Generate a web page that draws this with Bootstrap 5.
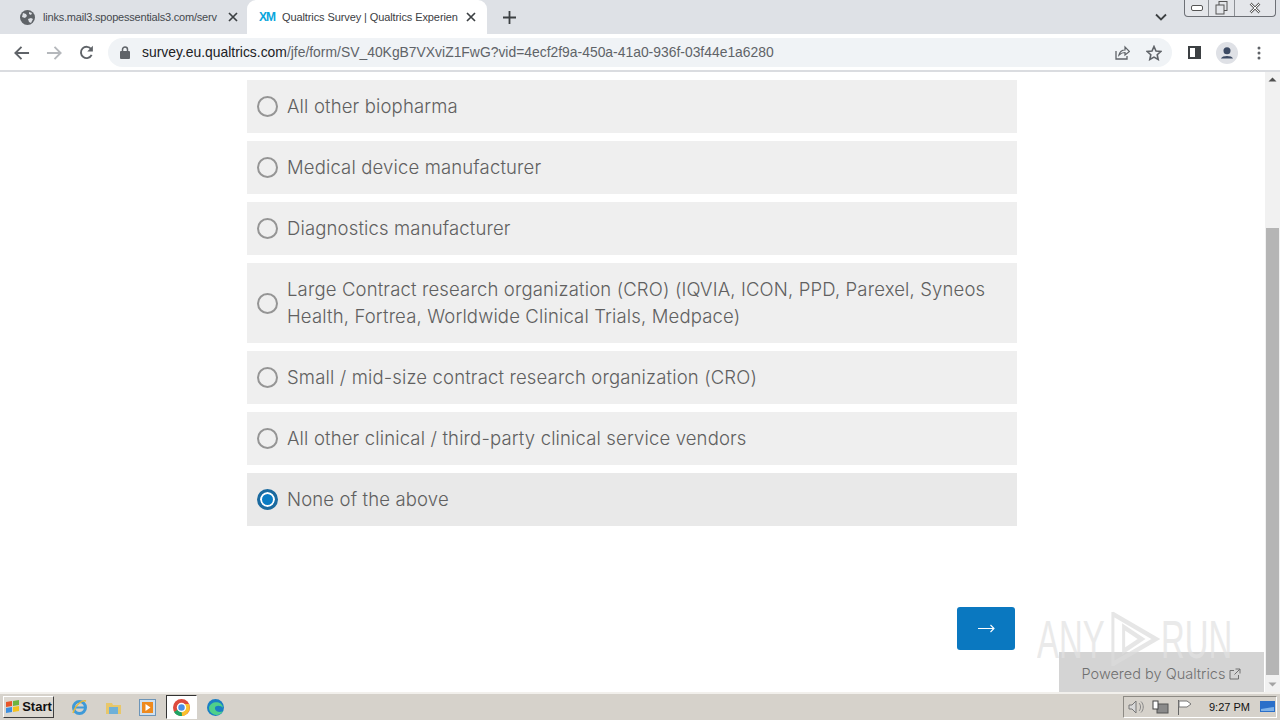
<!DOCTYPE html>
<html lang="en">
<head>
  <meta charset="UTF-8">
  <meta name="viewport" content="width=device-width, initial-scale=1">
  <title>Qualtrics Survey</title>
  <link href="https://cdn.jsdelivr.net/npm/bootstrap@5.3.3/dist/css/bootstrap.min.css" rel="stylesheet">
  <style>
    html, body { height: 720px; overflow: hidden; }
    body { font-family: "Liberation Sans", Arial, sans-serif; background: #fff; position: relative; }
    .tab-strip { height: 34px; background: #dee1e6; font-size: 11px; color: #45494e; }
    .chrome-tab { height: 34px; }
    .chrome-tab.first-tab { width: 247px; padding: 0 9px 0 20px; letter-spacing: -.2px; }
    .chrome-tab.active-tab { background: #fff; border-radius: 9px 9px 0 0; color: #3c4043; width: 240px; padding: 0 11px 0 12px; letter-spacing: -.1px; }
    .tab-title { flex: 1; white-space: nowrap; overflow: hidden; min-width: 0; }
    .xm-logo { color: #0aa5dc; font-weight: 700; font-size: 12px; letter-spacing: -1px; width: 23px; }
    .chevron-down { margin-left: auto; margin-right: 17px; }
    .win-btns { width: 92px; height: 17px; border: 1px solid #6d7076; border-top: 0; border-radius: 0 0 4px 4px; align-self: flex-start; margin-right: 4px; background: #e4e6ea; }
    .win-btns > div { border-right: 1px solid #8d9095; height: 100%; }
    .win-btns > div:last-child { border-right: 0; }
    .win-min { width: 24px; }
    .win-max { width: 26px; }
    .win-close { flex: 1; }
    .tool-bar { height: 38px; border-bottom: 2px solid #dadce0; background: #fff; padding: 1px 0 0 13px; }
    .url-box { width: 1064px; height: 29px; margin-left: 14px; background: #f0f3f6; border-radius: 15px; font-size: 13.9px; color: #5f6368; padding-left: 12px; white-space: nowrap; }
    .url-box b { font-weight: 400; color: #202124; }
    .page-area { height: 620px; }
    .survey-col { width: 1265px; padding: 8px 0 0 247px; }
    .answer-row { width: 770px; background: #efefef; padding: 13px 20px 13px 10px; gap: 9px; margin-bottom: 8px; font-family: Inter, "Liberation Sans", sans-serif; font-size: 18.5px; font-weight: 300; line-height: 27px; letter-spacing: .15px; color: #606060; }
    .answer-row.picked { background: #e9e9e9; }
    .radio-ring { flex: 0 0 21px; height: 21px; border: 2px solid #959595; border-radius: 50%; }
    .picked .radio-ring { border: 3px solid #1b6a9f; background: #0a7cc4; box-shadow: inset 0 0 0 2px #fff; }
    .next-wrap { width: 770px; padding: 73px 2px 0 0; }
    .next-btn { width: 58px; height: 43px; background: #0a78c0; border: 0; border-radius: 3px; padding: 0; }
    .scroll-bar { width: 15px; height: 620px; background: #f1f1f1; }
    .scroll-thumb { width: 13px; height: 447px; margin: 156px auto 0; background: #b5b5b5; }
    .powered-box { position: absolute; left: 1059px; top: 652px; width: 205px; height: 40px; padding-top: 4px; background: rgba(205,205,205,.85); color: #707070; font-family: Inter, sans-serif; font-size: 14.5px; font-weight: 300; }
    .any-mark { position: absolute; left: 1037px; top: 608px; width: 315px; opacity: .7; color: #e2e2e2; font-size: 53px; line-height: 1; transform: scaleX(.62); transform-origin: left center; }
    .task-bar { height: 28px; background: #d6d2cb; border-top: 2px solid #f2f0ec; padding-left: 3px; position: absolute; top: 692px; left: 0; width: 1280px; }
    .start-btn { width: 51px; height: 22px; background: #dcd8d1; border: 1px solid; border-color: #fff #3e3e3e #3e3e3e #fff; font-size: 13px; font-weight: 700; color: #111; gap: 2px; }
    .tray-box { width: 154px; height: 22px; margin-left: auto; margin-right: 3px; border: 1px solid; border-color: #8d8a84 #fff #fff #8d8a84; font-size: 11px; color: #111; padding: 0 1px 0 4px; }
    .chrome-active { width: 31px; height: 24px; background: #fff; border: 1px solid; border-color: #333 #fff #fff #333; }
  </style>
</head>
<body>

  <div class="tab-strip d-flex align-items-center">
    <div class="chrome-tab first-tab d-flex align-items-center">
      <svg width="15" height="15" viewBox="0 0 15 15" class="flex-shrink-0 me-2"><circle cx="7.500" cy="7.500" r="7.500" fill="#5f6368"/><path d="M3 3l3 1 1 2-2 2-3-1zM8 9l3-1 2 1-2 4-2-1zM9 2l3 1-1 2-2-1z" fill="#dee1e6"/></svg>
      <span class="tab-title">links.mail3.spopessentials3.com/serv</span>
      <svg width="10" height="10" viewBox="0 0 10 10" class="flex-shrink-0 ms-2"><path d="M1 1l8 8M9 1l-8 8" stroke="#3c4043" stroke-width="1.700"/></svg>
    </div>
    <div class="chrome-tab active-tab d-flex align-items-center">
      <span class="xm-logo">XM</span>
      <span class="tab-title">Qualtrics Survey | Qualtrics Experien</span>
      <svg width="10" height="10" viewBox="0 0 10 10" class="flex-shrink-0 ms-2"><path d="M1 1l8 8M9 1l-8 8" stroke="#3c4043" stroke-width="1.700"/></svg>
    </div>
    <svg width="13" height="13" viewBox="0 0 13 13" class="ms-3"><path d="M6.500 0v13M0 6.500h13" stroke="#3c4043" stroke-width="1.800"/></svg>
    <svg width="12" height="8" viewBox="0 0 12 8" class="chevron-down"><path d="M1 1.500l5 5 5-5" fill="none" stroke="#3c4043" stroke-width="1.800"/></svg>
    <div class="win-btns d-flex">
      <div class="win-min d-flex align-items-center justify-content-center"><svg width="12" height="6" viewBox="0 0 12 6"><rect x=".5" y=".5" width="11" height="5" rx="1.500" fill="#fff" stroke="#555"/></svg></div>
      <div class="win-max d-flex align-items-center justify-content-center"><svg width="13" height="14" viewBox="0 0 13 14"><rect x="4" y=".5" width="8" height="9" fill="none" stroke="#555"/><rect x="1" y="4" width="8" height="9" fill="#e4e6ea" stroke="#555"/></svg></div>
      <div class="win-close d-flex align-items-center justify-content-center"><svg width="12" height="12" viewBox="0 0 12 12"><path d="M1.500 1.500l9 9M10.500 1.500l-9 9" stroke="#666" stroke-width="2.500"/><path d="M1.500 1.500l9 9M10.500 1.500l-9 9" stroke="#fff" stroke-width="1"/></svg></div>
    </div>
  </div>

  <div class="tool-bar d-flex align-items-center">
    <svg width="17" height="16" viewBox="0 0 18 16" class="flex-shrink-0"><path d="M17 8H3M9 1.500L2.500 8 9 14.500" fill="none" stroke="#5f6368" stroke-width="2"/></svg>
    <svg width="17" height="16" viewBox="0 0 18 16" class="flex-shrink-0" style="margin-left:16px"><path d="M1 8h14M9 1.500L15.500 8 9 14.500" fill="none" stroke="#b5b8bc" stroke-width="2"/></svg>
    <svg width="15" height="15" viewBox="0 0 16 16" class="flex-shrink-0" style="margin-left:16px"><path d="M13.500 10.500A6 6 0 1 1 13 4.500" fill="none" stroke="#5f6368" stroke-width="2"/><path d="M14.800 0.800v6h-6z" fill="#5f6368"/></svg>
    <div class="url-box d-flex align-items-center flex-shrink-0">
      <svg width="10" height="13" viewBox="0 0 10 13" class="me-1"><rect y="5" width="10" height="8" rx="1" fill="#5f6368"/><path d="M2.500 5.500V3.500a2.500 2.500 0 0 1 5 0v2" fill="none" stroke="#5f6368" stroke-width="1.500"/></svg>
      <span class="ms-2"><b>survey.eu.qualtrics.com</b>/jfe/form/SV_40KgB7VXviZ1FwG?vid=4ecf2f9a-450a-41a0-936f-03f44e1a6280</span>
      <svg width="15" height="15" viewBox="0 0 15 15" style="margin-left:auto"><path d="M1 6v8h11v-3" fill="none" stroke="#5f6368" stroke-width="1.300"/><path d="M4 10c1-4 4-5 6-5V2l4.500 4.500L10 10V7.500c-2 0-4 .5-6 2.500z" fill="none" stroke="#5f6368" stroke-width="1.200"/></svg>
      <svg width="16" height="16" viewBox="0 0 16 16" style="margin:0 10px 0 16px"><path d="M8 1.500l2 4.500 4.800.5-3.600 3.200 1 4.800L8 12.100 3.800 14.500l1-4.800L1.200 6.500 6 6z" fill="none" stroke="#5f6368" stroke-width="1.600"/></svg>
    </div>
    <svg width="13" height="13" viewBox="0 0 13 13" class="flex-shrink-0" style="margin-left:16px"><rect x="1" y="1" width="11" height="11" fill="#fff" stroke="#3c4043" stroke-width="2"/><rect x="7" y="1" width="5" height="11" fill="#3c4043"/></svg>
    <svg width="22" height="22" viewBox="0 0 20 20" class="flex-shrink-0" style="margin-left:15px"><circle cx="10" cy="10" r="10" fill="#dfe1e6"/><circle cx="10" cy="8" r="3.200" fill="#3c4a63"/><path d="M4.500 15c1-3 10-3 11 0z" fill="#3c4a63"/></svg>
    <svg width="4" height="14" viewBox="0 0 4 14" class="flex-shrink-0" style="margin-left:19px"><circle cx="2" cy="2" r="1.500" fill="#5f6368"/><circle cx="2" cy="7" r="1.500" fill="#5f6368"/><circle cx="2" cy="12" r="1.500" fill="#5f6368"/></svg>
  </div>

  <div class="page-area d-flex">
    <div class="survey-col">
      <div class="answer-row d-flex align-items-center"><span class="radio-ring"></span><span>All other biopharma</span></div>
      <div class="answer-row d-flex align-items-center"><span class="radio-ring"></span><span>Medical device manufacturer</span></div>
      <div class="answer-row d-flex align-items-center"><span class="radio-ring"></span><span>Diagnostics manufacturer</span></div>
      <div class="answer-row d-flex align-items-center"><span class="radio-ring"></span><span>Large Contract research organization (CRO) (IQVIA, ICON, PPD, Parexel, Syneos Health, Fortrea, Worldwide Clinical Trials, Medpace)</span></div>
      <div class="answer-row d-flex align-items-center"><span class="radio-ring"></span><span>Small / mid-size contract research organization (CRO)</span></div>
      <div class="answer-row d-flex align-items-center"><span class="radio-ring"></span><span>All other clinical / third-party clinical service vendors</span></div>
      <div class="answer-row picked d-flex align-items-center"><span class="radio-ring"></span><span>None of the above</span></div>
      <div class="next-wrap d-flex justify-content-end">
        <button class="btn next-btn d-flex align-items-center justify-content-center" type="button">
          <svg width="17" height="9" viewBox="0 0 17 9"><path d="M0 4.500h16M12.500 1l3.500 3.500L12.500 8" fill="none" stroke="#fff" stroke-width="1.100"/></svg>
        </button>
      </div>
    </div>
    <div class="scroll-bar position-relative">
      <svg width="15" height="15" viewBox="0 0 15 15" class="position-absolute top-0 start-0"><path d="M3.500 9.500l4-4 4 4z" fill="#505050"/></svg>
      <div class="scroll-thumb"></div>
      <svg width="15" height="15" viewBox="0 0 15 15" class="position-absolute bottom-0 start-0"><path d="M3.500 5.500l4 4 4-4z" fill="#a3a3a3"/></svg>
    </div>
  </div>

  <div class="powered-box d-flex align-items-center justify-content-center gap-1">
    <span>Powered by Qualtrics</span>
    <svg width="12" height="12" viewBox="0 0 12 12"><path d="M9.500 7v4H1V2.500h4M6.500 1H11v4.500M11 1L5.500 6.500" fill="none" stroke="#707070"/></svg>
  </div>
  <div class="any-mark d-flex align-items-center justify-content-between">
    <span>ANY</span>
    <svg width="95" height="62" viewBox="0 0 95 62" preserveAspectRatio="none"><path d="M14 4v54M14 6l72 25-72 25M32 19l30 12-30 12z" fill="none" stroke="#dcdcdc" stroke-width="5"/></svg>
    <span>RUN</span>
  </div>

  <div class="task-bar d-flex align-items-center">
    <div class="start-btn d-flex align-items-center justify-content-center">
      <svg width="15" height="14" viewBox="0 0 15 14"><path d="M1 2l6-1v5l-6 1z" fill="#e8562a"/><path d="M8 1l6-1v5l-6 1z" fill="#6fb43f"/><path d="M1 8l6-1v5l-6 1z" fill="#3d8fe0"/><path d="M8 7l6-1v5l-6 1z" fill="#f5c21d"/></svg>
      <span>Start</span>
    </div>
    <div class="d-flex align-items-center" style="margin-left:17px;gap:17px">
      <svg width="17" height="17" viewBox="0 0 17 17"><circle cx="8.500" cy="8.500" r="6" fill="none" stroke="#3f9ad8" stroke-width="3"/><path d="M3 8.500h11" stroke="#3f9ad8" stroke-width="2"/><path d="M2 14C5 5 11 1 15 2" fill="none" stroke="#e6b93c" stroke-width="1.500"/></svg>
      <svg width="17" height="17" viewBox="0 0 17 17"><path d="M1 4h6l1 2h8v9H1z" fill="#e8c76a"/><rect x="4" y="8" width="9" height="7" fill="#6fb0d8"/></svg>
      <svg width="17" height="17" viewBox="0 0 17 17"><rect x=".5" y=".5" width="16" height="16" fill="#cfe0ef" stroke="#6d95b8"/><rect x="3" y="3" width="11" height="11" fill="#ee8a1e"/><path d="M6.500 5l5 3.500-5 3.500z" fill="#fff"/></svg>
    </div>
    <div class="chrome-active d-flex align-items-center justify-content-center" style="margin-left:10px">
      <svg width="17" height="17" viewBox="0 0 17 17"><circle cx="8.500" cy="8.500" r="8.500" fill="#dd4b3e"/><path d="M8.500 8.500L1 13a8.500 8.500 0 0 0 8 4z" fill="#1fa463"/><path d="M8.500 5h7.500a8.500 8.500 0 0 1-7 12z" fill="#fbc02d"/><circle cx="8.500" cy="8.500" r="4" fill="#4a8fe7" stroke="#fff" stroke-width="1.500"/></svg>
    </div>
    <svg width="17" height="17" viewBox="0 0 17 17" style="margin-left:10px"><circle cx="8.500" cy="8.500" r="8.500" fill="#1a7fc4"/><path d="M2 9c1-7 13-8 14 0-2-3-9-3-8 1 1 3 5 4 8 2-2 4-7 5-10 3-2-1-4-3-4-6z" fill="#4fd08a"/></svg>
    <div class="tray-box d-flex align-items-center">
      <svg width="16" height="14" viewBox="0 0 16 14"><path d="M1 5h3l4-4v12l-4-4H1z" fill="#d8d8d8" stroke="#777"/><path d="M11 3c2 2 2 6 0 8M13 1.500c3 3 3 8 0 11" fill="none" stroke="#888"/></svg>
      <svg width="17" height="15" viewBox="0 0 17 15" class="ms-2"><rect x="5" y="4" width="11" height="9" fill="#8a8a8a" stroke="#555"/><rect x="1" y="1" width="5" height="8" fill="#fff" stroke="#444"/></svg>
      <svg width="15" height="15" viewBox="0 0 15 15" class="ms-2"><path d="M1.500 0v15" stroke="#666"/><path d="M2 1h8l4 3-4 3H2z" fill="#fff" stroke="#777"/></svg>
      <span style="margin-left:17px">9:27 PM</span>
      <svg width="15" height="13" viewBox="0 0 15 13" style="margin-left:auto"><rect width="15" height="11" fill="#2a6fc9"/><path d="M1 8l13-2v4H1z" fill="#7fb2e8"/></svg>
    </div>
  </div>

</body>
</html>
